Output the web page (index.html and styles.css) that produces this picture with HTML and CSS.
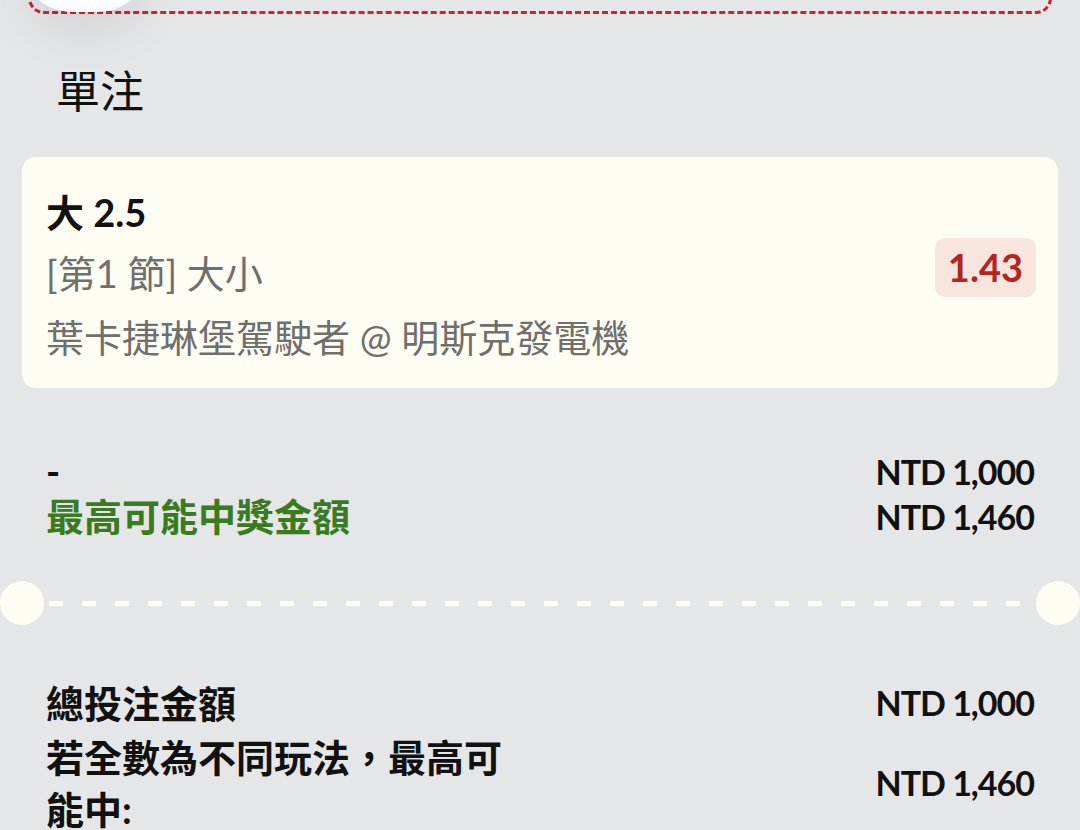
FILE: index.html
```html
<!DOCTYPE html>
<html lang="zh-Hant">
<head>
<meta charset="utf-8">
<title>單注</title>
<link rel="stylesheet" href="styles.css">
</head>
<body>
<div class="page">
  <div class="top-strip">
    <div class="dash-box"></div>
    <div class="knob"></div>
  </div>

  <h2 class="section-title">單注</h2>

  <div class="card">
    <div class="card-info">
      <div class="sel">大 2.5</div>
      <div class="market">[第1 節] 大小</div>
      <div class="teams">葉卡捷琳堡駕駛者 @ 明斯克發電機</div>
    </div>
    <div class="odds">1.43</div>
  </div>

  <div class="summary">
    <div class="sum-left">
      <div class="dash-mark">-</div>
      <div class="win-label">最高可能中獎金額</div>
    </div>
    <div class="sum-right">
      <div class="amount">NTD 1,000</div>
      <div class="amount">NTD 1,460</div>
    </div>
  </div>

  <div class="divider">
    <span class="hole"></span>
    <span class="dashes"></span>
    <span class="hole"></span>
  </div>

  <div class="totals">
    <div class="total-row">
      <div class="total-label">總投注金額</div>
      <div class="amount">NTD 1,000</div>
    </div>
    <div class="total-row">
      <div class="total-label">若全數為不同玩法，最高可能中:</div>
      <div class="amount">NTD 1,460</div>
    </div>
  </div>
</div>
</body>
</html>
```

FILE: styles.css
```css
html, body {
  margin: 0;
  padding: 0;
}
body {
  background: #e5e6e8;
  font-family: "Lato", "Noto Sans CJK TC", sans-serif;
  color: #111;
  width: 1080px;
  height: 830px;
  overflow: hidden;
}
.page {
  width: 1080px;
}

/* top strip */
.top-strip {
  position: relative;
  display: flow-root;
  height: 14px;
}
.dash-box {
  margin: -66px 28px 0 28px;
  height: 80px;
  border: 3px dashed #c4282e;
  border-radius: 16px;
  box-sizing: border-box;
}
.knob {
  position: absolute;
  left: 30px;
  top: -48px;
  width: 110px;
  height: 60px;
  border-radius: 0 0 44px 44px / 0 0 30px 30px;
  background: #ffffff;
  box-shadow: 0 14px 50px rgba(0, 0, 0, 0.10);
}

.section-title {
  margin: 47px 0 36px 56px;
  font-size: 44px;
  line-height: 60px;
  font-weight: 400;
  color: #111;
}

/* card */
.card {
  margin: 0 22px;
  background: #fdfdf4;
  border-radius: 14px;
  padding: 25px 22px 20px 24px;
  display: flex;
  align-items: center;
  justify-content: space-between;
}
.card-info {
  display: flex;
  flex-direction: column;
}
.sel {
  font-size: 38px;
  line-height: 61px;
  font-weight: 700;
  color: #111;
}
.market, .teams {
  font-size: 38px;
  line-height: 61px;
  font-weight: 400;
  color: #6f6f6b;
}
.teams {
  margin-top: 3px;
}
.odds {
  background: #f7e5de;
  color: #b3261e;
  font-size: 38px;
  font-weight: 700;
  line-height: 59px;
  height: 59px;
  padding: 0 13px;
  border-radius: 10px;
  margin-bottom: 15px;
}

/* summary */
.summary {
  margin: 61px 46px 0 46px;
  display: flex;
  justify-content: space-between;
}
.sum-left, .sum-right {
  display: flex;
  flex-direction: column;
}
.sum-right {
  align-items: flex-end;
}
.dash-mark, .win-label, .amount {
  font-size: 38px;
  line-height: 45px;
  font-weight: 700;
}
.dash-mark {
  color: #111;
}
.win-label {
  color: #3a7b22;
}
.amount {
  color: #111;
  white-space: nowrap;
  font-size: 34px;
  letter-spacing: -1px;
}

/* divider */
.divider {
  margin-top: 42px;
  display: flex;
  align-items: center;
  height: 44px;
}
.hole {
  width: 44px;
  height: 44px;
  border-radius: 50%;
  background: #fdfdf4;
  flex: none;
}
.dashes {
  flex: 1;
  height: 5px;
  margin: 0 5px;
  background: repeating-linear-gradient(to right, #fdfdf4 0 14px, transparent 14px 33px);
}

/* totals */
.totals {
  margin: 52px 46px 0 46px;
  display: flex;
  flex-direction: column;
  gap: 2px;
}
.total-row {
  display: flex;
  justify-content: space-between;
  align-items: center;
}
.total-label {
  max-width: 480px;
  font-size: 38px;
  line-height: 52px;
  font-weight: 700;
  color: #111;
}
.total-row .amount {
  line-height: 52px;
}
```
